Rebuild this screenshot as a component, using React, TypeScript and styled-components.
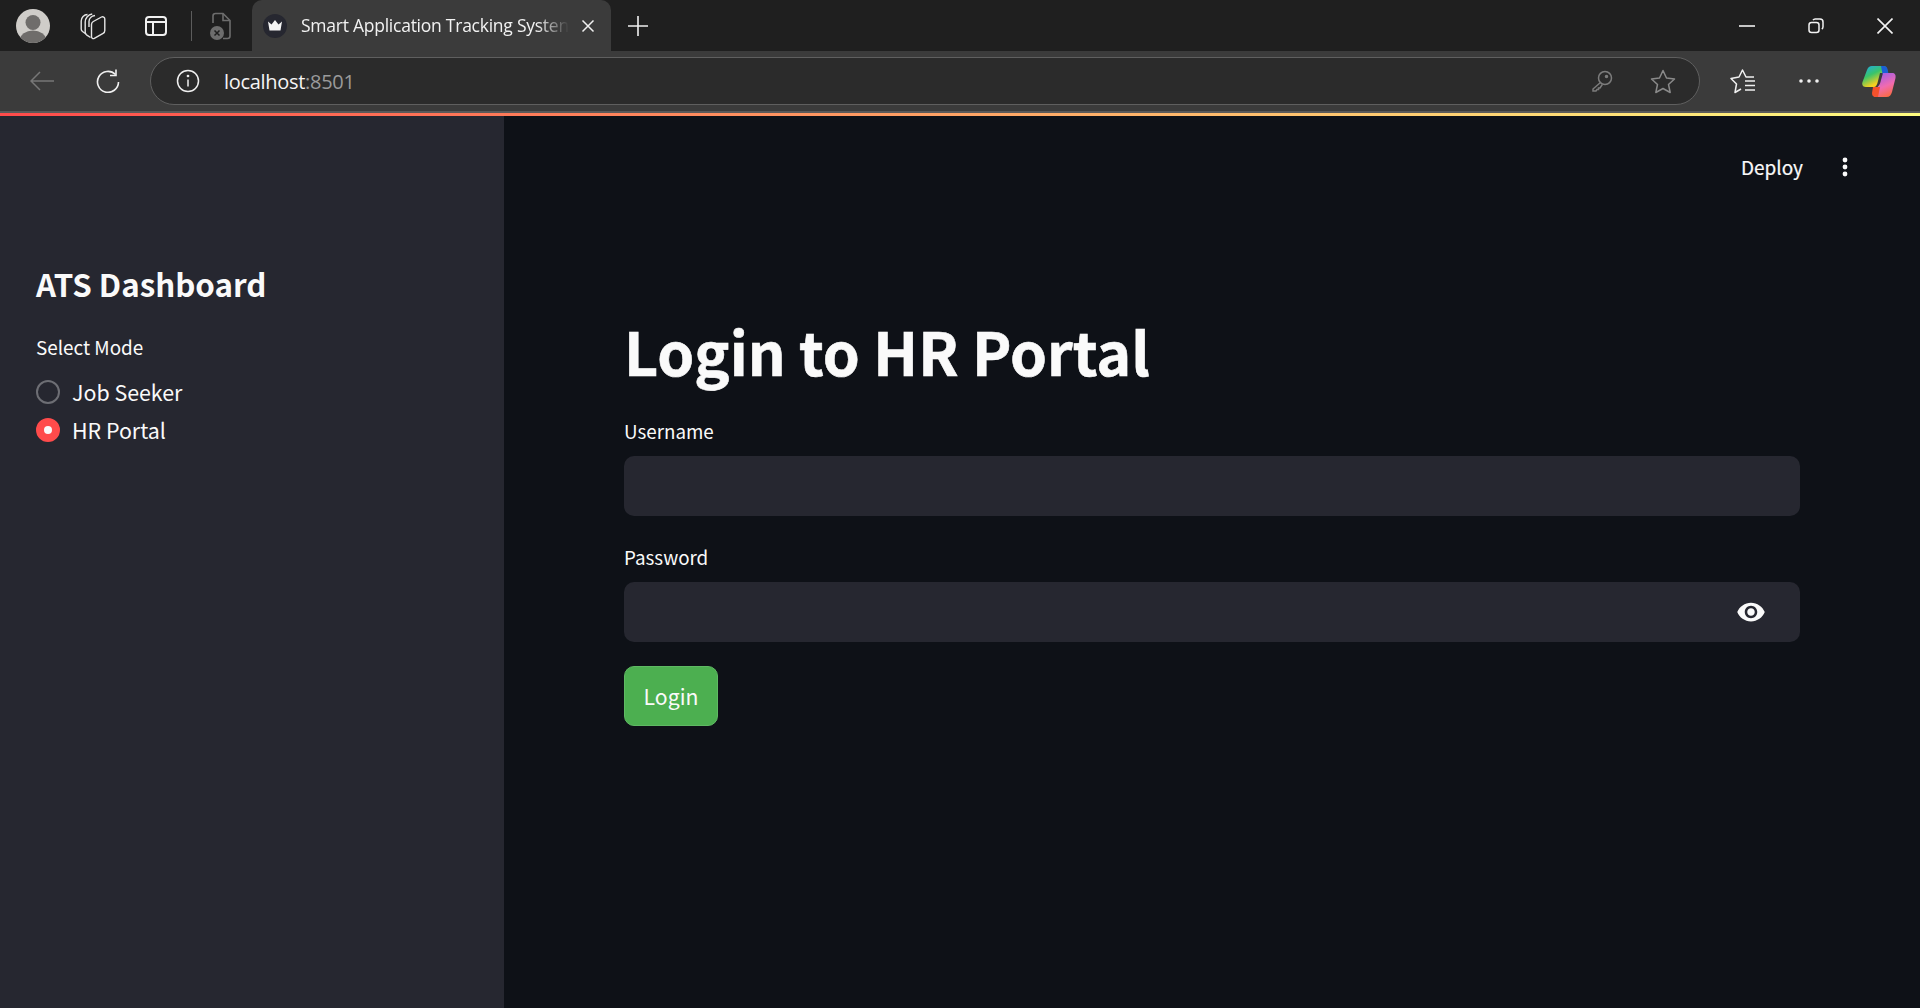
import React from "react";
import styled, { createGlobalStyle } from "styled-components";

const SOURCE = `"Noto Sans CJK SC", "Noto Sans", sans-serif`;
const UI = `"Open Sans", "Noto Sans", sans-serif`;

const App = () => {
  return (
    <>
      <GlobalStyle />
      <Frame>
        <TabStrip>
          <Avatar>
            <svg width="34" height="34" viewBox="0 0 34 34">
              <defs>
                <clipPath id="avatarClip">
                  <circle cx="17" cy="17" r="17" />
                </clipPath>
              </defs>
              <circle cx="17" cy="17" r="17" fill="#cfcdc9" />
              <g clipPath="url(#avatarClip)" fill="#6f6d6b">
                <circle cx="17" cy="13.5" r="7.5" />
                <ellipse cx="17" cy="31" rx="13" ry="9.5" />
              </g>
            </svg>
          </Avatar>
          <StripIcon $gap={30}>
            <svg width="26" height="28" viewBox="0 0 26 28" fill="none" stroke="#e6e6e6" strokeWidth="1.4" strokeLinejoin="round">
              <path d="M6 22 2.500 19.500C1.700 18.900 1.200 18 1.200 17V9c0-3.500 2.800-6.500 6.300-6.500" />
              <path d="M10.500 25.500 6.500 22.800c-.8-.6-1.300-1.500-1.300-2.500V10c0-4 3-7.500 7-8" />
              <path d="M11.500 12.500c0-1.300.7-2.400 1.800-3L21.500 5c1.500-.8 3.300.3 3.300 2v11.500c0 1.200-.6 2.300-1.700 2.900l-8.800 5c-1.300.7-2.800-.2-2.800-1.700z" />
              <path d="M9 15V9.500C9 6.500 11.500 4 15 3.500" />
            </svg>
          </StripIcon>
          <StripIcon $gap={38}>
            <svg width="24" height="24" viewBox="0 0 24 24" fill="none" stroke="#f0f0f0" strokeWidth="2">
              <rect x="2" y="3" width="20" height="18" rx="3" />
              <path d="M2 8h20M9 8v13" />
            </svg>
          </StripIcon>
          <StripDivider />
          <StripIcon $gap={17}>
            <svg width="24" height="30" viewBox="0 0 24 30" fill="none" stroke="#6d6d6d" strokeWidth="1.6">
              <path d="M4 12V5c0-1.500 1-2.500 2.500-2.500H14l7 7V25c0 1.500-1 2.500-2.500 2.500H14" />
              <path d="M14 2.500V9.500h7" />
              <circle cx="8" cy="22" r="7" fill="#6d6d6d" stroke="none" />
              <path d="M5.500 19.500l5 5m0-5l-5 5" stroke="#1f1f1f" strokeWidth="1.5" />
            </svg>
          </StripIcon>
          <Tab>
            <Favicon>
              <svg width="16" height="13" viewBox="0 0 16 13">
                <path d="M1 2.500 4.500 5.500 8 1l3.500 4.500L15 2.500 13.500 11.500h-11z" fill="#f4f4f4" />
              </svg>
            </Favicon>
            <TabTitle>Smart Application Tracking Systen</TabTitle>
            <TabClose>
              <svg width="14" height="14" viewBox="0 0 14 14" stroke="#f0f0f0" strokeWidth="1.5">
                <path d="M1.500 1.500l11 11m0-11l-11 11" />
              </svg>
            </TabClose>
          </Tab>
          <StripIcon $gap={17}>
            <svg width="20" height="20" viewBox="0 0 20 20" stroke="#f0f0f0" strokeWidth="1.6">
              <path d="M10 0v20M0 10h20" />
            </svg>
          </StripIcon>
          <WindowControls>
            <WindowButton>
              <svg width="16" height="16" viewBox="0 0 16 16" stroke="#f2f2f2" strokeWidth="1.6">
                <path d="M0 8h16" />
              </svg>
            </WindowButton>
            <WindowButton>
              <svg width="16" height="16" viewBox="0 0 16 16" fill="none" stroke="#f2f2f2" strokeWidth="1.5">
                <rect x="1" y="4.500" width="10" height="10" rx="2.500" />
                <path d="M5 2.200C5.500 1.400 6.200 1 7.200 1H12c1.700 0 3 1.300 3 3v4.800c0 1-.4 1.700-1.200 2.200" />
              </svg>
            </WindowButton>
            <WindowButton>
              <svg width="16" height="16" viewBox="0 0 16 16" stroke="#f2f2f2" strokeWidth="1.6">
                <path d="M.5.500l15 15m0-15l-15 15" />
              </svg>
            </WindowButton>
          </WindowControls>
        </TabStrip>
        <Toolbar>
          <NavIcon $gap={42}>
            <svg width="24" height="20" viewBox="0 0 24 20" fill="none" stroke="#777" strokeWidth="1.500">
              <path d="M24 10H1M10 1l-9 9 9 9" />
            </svg>
          </NavIcon>
          <NavIcon $gap={30}>
            <svg width="24" height="24" viewBox="0 0 24 24" fill="none" stroke="#f0f0f0" strokeWidth="1.600">
              <path d="M19.500 5.500A10.500 10.500 0 1 0 22.500 13" />
              <path d="M20 .5v6h-6" />
            </svg>
          </NavIcon>
          <AddressBar>
            <InfoIcon>
              <svg width="24" height="24" viewBox="0 0 24 24" fill="none" stroke="#f0f0f0" strokeWidth="1.500">
                <circle cx="12" cy="12" r="10.500" />
                <path d="M12 10.500v7" />
                <circle cx="12" cy="7" r=".6" fill="#f0f0f0" />
              </svg>
            </InfoIcon>
            <Url>
              localhost<UrlPort>:8501</UrlPort>
            </Url>
            <AddressActions>
              <svg width="22" height="22" viewBox="0 0 22 22" fill="none" stroke="#7c7c7c" strokeWidth="1.500">
                <circle cx="14" cy="8" r="6.500" />
                <path d="M9.500 12.500 2 19v2h3l1-1.500h1.500V18H9l2.300-3.500" />
                <circle cx="15.500" cy="6.500" r="1" fill="#7c7c7c" />
              </svg>
              <svg width="26" height="25" viewBox="0 0 26 25" fill="none" stroke="#8a8a8a" strokeWidth="1.500" strokeLinejoin="round">
                <path d="M13 1.500l3.500 7.500 8 1-6 5.500 1.700 8L13 19.500 5.800 23.500l1.700-8-6-5.500 8-1z" />
              </svg>
            </AddressActions>
          </AddressBar>
          <ToolbarRight>
            <svg width="26" height="25" viewBox="0 0 26 25" fill="none" stroke="#f0f0f0" strokeWidth="1.500" strokeLinejoin="round">
              <path d="M24 8H16L12.500 1 9 8 1 9.500 6.500 15 5 23.500 11 20" />
              <path d="M15 12h10M15 16.500h10M15 21h10" />
            </svg>
            <svg width="20" height="4" viewBox="0 0 20 4" fill="#f0f0f0">
              <circle cx="2" cy="2" r="1.800" />
              <circle cx="10" cy="2" r="1.800" />
              <circle cx="18" cy="2" r="1.800" />
            </svg>
            <svg width="34" height="31" viewBox="0 0 34 31">
              <defs>
                <linearGradient id="copilotA" x1="0" y1="0" x2="0.6" y2="1">
                  <stop offset="0" stopColor="#1fa8f0" />
                  <stop offset=".45" stopColor="#39c46a" />
                  <stop offset=".85" stopColor="#f5d020" />
                </linearGradient>
                <linearGradient id="copilotB" x1="0.3" y1="0" x2="0.7" y2="1">
                  <stop offset="0" stopColor="#a05de8" />
                  <stop offset=".55" stopColor="#f06bb0" />
                  <stop offset="1" stopColor="#fb6a3c" />
                </linearGradient>
              </defs>
              <path d="M10 0h11c2.500 0 3.500 1 4 3l1 4h-8l-2 8c-1 4-2 6-4 6H4c-3 0-4.500-2-3.500-5L5 4c1-2.500 2.500-4 5-4z" fill="url(#copilotA)" />
              <path d="M19 0h2.500c2.500 0 3.500 1 4 3l1 5h-6z" fill="#1c5fd6" />
              <path d="M21 7h9c3 0 4 2 3.500 5L30 26c-.8 3-2.500 5-5.500 5H14c-2.500 0-3-2-2-4l3.500-6c2-2 3-4 3.500-7z" fill="url(#copilotB)" />
              <path d="M11 21h7l-2 10h-2c-3 0-4-1.500-4-4z" fill="#f4512c" />
            </svg>
          </ToolbarRight>
        </Toolbar>
        <ToolbarEdge />
        <Decoration />
        <Page>
          <Sidebar>
            <SideTitle>ATS Dashboard</SideTitle>
            <FieldLabel>Select Mode</FieldLabel>
            <RadioGroup>
              <RadioRow>
                <RadioDot />
                <RadioText>Job Seeker</RadioText>
              </RadioRow>
              <RadioRow>
                <RadioDot $checked />
                <RadioText>HR Portal</RadioText>
              </RadioRow>
            </RadioGroup>
          </Sidebar>
          <Main>
            <TopBar>
              <DeployLabel>Deploy</DeployLabel>
              <svg width="6" height="20" viewBox="0 0 6 20" fill="#fafafa">
                <circle cx="3" cy="3" r="2.400" />
                <circle cx="3" cy="10" r="2.400" />
                <circle cx="3" cy="17" r="2.400" />
              </svg>
            </TopBar>
            <Heading>Login to HR Portal</Heading>
            <Field>
              <InputLabel>Username</InputLabel>
              <InputBox />
            </Field>
            <Field>
              <InputLabel>Password</InputLabel>
              <InputBox>
                <svg width="30" height="30" viewBox="0 0 24 24" fill="#fafafa">
                  <path d="M12 4.500C7 4.500 2.730 7.610 1 12c1.730 4.390 6 7.500 11 7.500s9.270-3.110 11-7.500c-1.730-4.390-6-7.500-11-7.500zM12 17c-2.760 0-5-2.240-5-5s2.240-5 5-5 5 2.240 5 5-2.240 5-5 5zm0-8c-1.660 0-3 1.340-3 3s1.340 3 3 3 3-1.340 3-3-1.340-3-3-3z" />
                </svg>
              </InputBox>
            </Field>
            <LoginButton>Login</LoginButton>
          </Main>
        </Page>
      </Frame>
    </>
  );
};

const GlobalStyle = createGlobalStyle`
  html, body {
    margin: 0;
    padding: 0;
    background: #0e1117;
  }
  * {
    box-sizing: border-box;
  }
`;

const Frame = styled.div`
  width: 1920px;
  height: 1008px;
  display: flex;
  flex-direction: column;
  overflow: hidden;
`;

const TabStrip = styled.div`
  height: 51px;
  flex: none;
  display: flex;
  align-items: center;
  background: #1f1f1f;
`;

const Avatar = styled.div`
  margin-left: 16px;
  width: 34px;
  height: 34px;
  display: flex;
`;

const StripIcon = styled.div<{ $gap: number }>`
  margin-left: ${(p) => p.$gap}px;
  display: flex;
`;

const StripDivider = styled.div`
  width: 1px;
  height: 30px;
  margin-left: 23px;
  background: #5c5c5c;
`;

const Tab = styled.div`
  width: 359px;
  height: 51px;
  margin-left: 19px;
  padding: 0 16px 0 11px;
  display: flex;
  align-items: center;
  background: #3b3b3b;
  border-radius: 10px 10px 0 0;
`;

const Favicon = styled.div`
  width: 24px;
  height: 24px;
  border-radius: 50%;
  background: #262730;
  display: flex;
  align-items: center;
  justify-content: center;
  flex: none;
`;

const TabTitle = styled.div`
  width: 269px;
  margin: 0 0 2px 14px;
  white-space: nowrap;
  font: 400 17.500px ${UI};
  color: #f2f2f2;
  mask-image: linear-gradient(to right, #000 88%, transparent 100%);
  letter-spacing: -0.250px;
`;

const TabClose = styled.div`
  margin-left: 12px;
  display: flex;
`;

const WindowControls = styled.div`
  margin-left: auto;
  margin-right: 27px;
  display: flex;
  gap: 53px;
`;

const WindowButton = styled.div`
  display: flex;
`;

const Toolbar = styled.div`
  height: 60px;
  flex: none;
  display: flex;
  align-items: center;
  padding-left: 30px;
  background: #3b3b3b;
`;

const NavIcon = styled.div<{ $gap: number }>`
  width: 24px;
  margin-right: ${(p) => p.$gap}px;
  display: flex;
  justify-content: center;
`;

const AddressBar = styled.div`
  width: 1550px;
  height: 48px;
  padding: 0 23px 0 25px;
  display: flex;
  align-items: center;
  border: 1.500px solid #5f5f5f;
  border-radius: 24px;
  background: #2b2b2b;
`;

const InfoIcon = styled.div`
  display: flex;
`;

const Url = styled.div`
  margin-left: 24px;
  font: 400 20px ${UI};
  color: #f5f5f5;
  letter-spacing: -0.300px;
`;

const UrlPort = styled.span`
  color: #9a9a9a;
`;

const AddressActions = styled.div`
  margin-left: auto;
  display: flex;
  align-items: center;
  gap: 37px;
`;

const ToolbarRight = styled.div`
  margin-left: 30px;
  display: flex;
  align-items: center;
  gap: 43px;
`;

const ToolbarEdge = styled.div`
  height: 2px;
  flex: none;
  background: #5a5a5a;
`;

const Decoration = styled.div`
  height: 3px;
  flex: none;
  background: linear-gradient(90deg, #ff4b4b, #fffd80);
`;

const Page = styled.div`
  flex: 1;
  min-height: 0;
  display: flex;
  font-family: ${SOURCE};
  color: #fafafa;
`;

const Sidebar = styled.aside`
  width: 504px;
  flex: none;
  padding: 143px 36px 0;
  background: #262730;
`;

const SideTitle = styled.h2`
  margin: 0;
  font-size: 31.300px;
  font-weight: 600;
  line-height: 50px;
`;

const FieldLabel = styled.div`
  margin-top: 24px;
  font-size: 18.900px;
  line-height: 28px;
`;

const RadioGroup = styled.div`
  margin-top: 15px;
  display: flex;
  flex-direction: column;
  gap: 6px;
`;

const RadioRow = styled.div`
  height: 32px;
  display: flex;
  align-items: center;
  gap: 12px;
`;

const RadioDot = styled.span<{ $checked?: boolean }>`
  width: 24px;
  height: 24px;
  flex: none;
  border-radius: 50%;
  background: ${(p) => (p.$checked ? "#ff4b4b" : "#262730")};
  border: ${(p) => (p.$checked ? "8px solid #ff4b4b" : "2px solid #6d6e74")};
  &::after {
    content: "";
    display: ${(p) => (p.$checked ? "block" : "none")};
    width: 8px;
    height: 8px;
    border-radius: 50%;
    background: #fafafa;
  }
`;

const RadioText = styled.span`
  font-size: 21.400px;
  line-height: 32px;
`;

const Main = styled.main`
  flex: 1;
  padding: 0 120px;
  background: #0e1117;
`;

const TopBar = styled.div`
  height: 60px;
  margin-top: 21px;
  margin-right: -48px;
  display: flex;
  align-items: center;
  justify-content: flex-end;
  gap: 39px;
`;

const DeployLabel = styled.span`
  font-size: 19px;
  font-weight: 400;
  line-height: 28px;
  -webkit-text-stroke: 0.2px #fafafa;
`;

const Heading = styled.h1`
  margin: 112px 0 0;
  font-size: 59.200px;
  font-weight: 700;
  line-height: 82px;
  -webkit-text-stroke: 0.6px #fafafa;
`;

const Field = styled.div`
  margin-top: 26px;
  & + & {
    margin-top: 27px;
  }
`;

const InputLabel = styled.div`
  font-size: 18.800px;
  line-height: 28px;
  margin-bottom: 11px;
`;

const InputBox = styled.div`
  height: 60px;
  padding-right: 34px;
  display: flex;
  align-items: center;
  justify-content: flex-end;
  border-radius: 10px;
  background: #262730;
`;

const LoginButton = styled.button`
  display: block;
  width: 94px;
  height: 60px;
  margin-top: 24px;
  padding: 0;
  border: 1px solid #5fb963;
  border-radius: 10px;
  background: #4caf50;
  color: #fafafa;
  font-family: ${SOURCE};
  font-size: 21.200px;
  line-height: 32px;
`;

export default App;
